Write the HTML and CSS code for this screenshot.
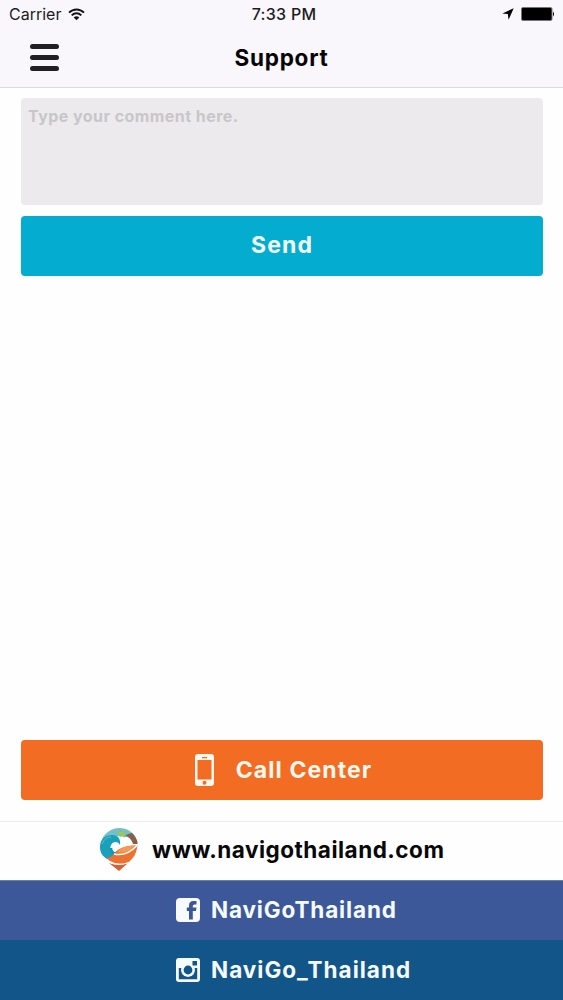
FILE: index.html
```html
<!DOCTYPE html>
<html lang="en">
<head>
<meta charset="utf-8">
<title>Support</title>
<link rel="stylesheet" href="styles.css">
</head>
<body>
<div class="screen">
  <header class="header">
    <div class="status">
      <div class="carrier"><span>Carrier</span>
        <svg class="wifi" width="17" height="13" viewBox="0 0 17 13" fill="none" stroke="#161418" stroke-width="2"><path d="M1 4.600C5.200.3 11.800.3 16 4.600M3.700 7.400C6.500 4.600 10.500 4.600 13.300 7.400"/><path d="M8.500 12.300 5.700 9.400Q8.500 7 11.300 9.400Z" fill="#161418" stroke="none"/></svg>
      </div>
      <span class="clock">7:33 PM</span>
      <div class="indicators">
        <svg width="12" height="12" viewBox="0 0 12 12"><path d="M11.700.3 6.600 11.700 5.800 6.100.3 5.400Z" fill="#000"/></svg>
        <svg width="34" height="14" viewBox="0 0 34 14"><rect x=".5" y=".5" width="30.500" height="13" rx="1.500" fill="#000" stroke="#77757a"/><path d="M32 4.500Q34 7 32 9.500Z" fill="#000"/></svg>
      </div>
    </div>
    <div class="navbar">
      <button class="menu" aria-label="Menu"><i></i><i></i><i></i></button>
      <h1 class="title">Support</h1>
    </div>
  </header>
  <main class="content">
    <textarea class="comment" placeholder="Type your comment here."></textarea>
    <button class="button send"><span>Send</span></button>
    <button class="button call">
      <svg width="19" height="32" viewBox="0 0 19 32"><path fill="#fff8ee" fill-rule="evenodd" d="M3 0H16Q19 0 19 3V29Q19 32 16 32H3Q0 32 0 29V3Q0 0 3 0ZM2.500 6V25.500H16.500V6ZM7 3V4.300H12V3ZM9.500 26.800A2 2 0 1 0 9.500 30.800 2 2 0 1 0 9.500 26.800Z"/></svg>
      <span>Call Center</span>
    </button>
  </main>
  <footer class="links">
    <a class="link web">
      <svg width="38" height="43" viewBox="0 0 38 43">
        <path d="M2 11C6 4 12 0 19 0C27 0 33 4 36 10L26 9L16 8Z" fill="#75bfc8"/>
        <path d="M25 7L32 5C36 9 38 13 37.500 16L33 16C32 12 29 9 25 7Z" fill="#85604a"/>
        <path d="M0 19C0 11 5 7 12 7C18 7 21 11 20 17C18 13 13 13 11 17C9 22 12 26 18 27L12 31L7 31C2 28 0 24 0 19Z" fill="#1a9fbd"/>
        <path d="M11 20C11 25 15 27 20 23" fill="none" stroke="#1597b5" stroke-width="2.500"/>
        <path d="M2 16C4 11 7 9 11 9" fill="none" stroke="#62bfcd" stroke-width="1"/>
        <path d="M14 26C18 20 26 17 37.500 17.500C36 29 30 34 25 36Q17 37 10 33L6 30C10 30 12 28 14 26Z" fill="#ee7131"/>
        <path d="M17 24C22 19 29 17 37 17.500C32 23 25 26 17 24Z" fill="#f59a55"/>
        <path d="M14 26C23 28 31 24 37 17.500" fill="none" stroke="#fff" stroke-width="1.500"/>
        <path d="M9 35Q19 39 28 35L19 43Z" fill="#d95e31"/>
        <path d="M10 34.500Q19 38 29 34.500" fill="none" stroke="#fff" stroke-width="1"/>
        <path d="M20 9 20.500 6 17 9 19 5 16 3 21 4 24 2 23.500 5 28 7 24 6.500 25 10 22 7Z" fill="#9bca50"/>
      </svg>
      <span>www.navigothailand.com</span>
    </a>
    <a class="link facebook">
      <svg width="24" height="24" viewBox="0 0 24 24"><rect width="24" height="24" rx="4" fill="#f7fbff"/><path d="M13 21.500V13H10.800V9.500H13V7.500Q13 3 17.300 3H20.500V6.500H18.500Q16.800 6.500 16.800 8V9.500H20.500L20 13H16.800V21.500Z" fill="#3c5798"/></svg>
      <span>NaviGoThailand</span>
    </a>
    <a class="link instagram">
      <svg width="24" height="24" viewBox="0 0 24 24"><rect width="24" height="24" rx="3" fill="#f5fbff"/><path d="M2.800 10H5.300A7 7 0 1 0 18.700 10H21.200V21.200H2.800ZM16.500 3H21V7.500H16.500Z" fill="#125588"/><circle cx="12" cy="12" r="4.400" fill="#125588"/></svg>
      <span>NaviGo_Thailand</span>
    </a>
  </footer>
</div>
</body>
</html>
```
FILE: styles.css
```css
* { box-sizing: border-box; }
body { margin: 0; font-family: Inter, "Liberation Sans", sans-serif; background: #fefefe; }
button { border: 0; font: inherit; cursor: pointer; }
svg { display: block; flex: none; }
.screen { width: 563px; height: 1000px; display: flex; flex-direction: column; }
.header { height: 88px; background: #f9f7fb; border-bottom: 1px solid #dddbdf; }
.status { height: 28px; padding: 0 8px 0 9px; display: grid; grid-template-columns: 1fr auto 1fr; align-items: center; color: #1d1b1f; }
.carrier { display: flex; align-items: center; gap: 7px; font-size: 16px; letter-spacing: 0; }
.clock { font-size: 16px; font-weight: 500; letter-spacing: .3px; padding-left: 4px; }
.indicators { display: flex; align-items: center; justify-content: flex-end; gap: 7px; }
.navbar { height: 58px; display: grid; grid-template-columns: 90px 1fr 90px; align-items: center; }
.menu { width: 29px; height: 27px; margin-left: 30px; padding: 0; background: none; display: flex; flex-direction: column; justify-content: space-between; }
.menu i { height: 5px; border-radius: 3px; background: #211f24; }
.title { margin: 0; padding-top: 2px; text-align: center; font-size: 22.5px; line-height: 30px; font-weight: 700; letter-spacing: .75px; color: #050406; }
.content { flex: 1; padding: 10px 20px 21px 21px; display: flex; flex-direction: column; }
.comment { width: 100%; height: 107px; margin: 0 0 11px; padding: 7px 7px; border: 0; border-radius: 4px; resize: none; background: #eceaed; font: 700 16px/22px Inter, sans-serif; letter-spacing: .45px; }
.comment::placeholder { color: #c8c6c9; opacity: 1; }
.button { width: 100%; height: 60px; padding: 0 0 2px; border-radius: 4px; display: flex; align-items: center; justify-content: center; font-size: 23px; font-weight: 700; letter-spacing: 1.100px; color: #f2ffff; }
.send { background: #04adcf; }
.call { margin-top: auto; padding-bottom: 0; gap: 22px; background: #f26c24; color: #fff8ee; }
.call svg { margin-left: 3px; }
.call span { padding-bottom: 1px; }
.links { height: 179px; border-top: 1px solid #ececee; }
.link { height: 60px; display: flex; align-items: center; font-size: 22.5px; font-weight: 700; color: #f4faff; padding-left: 176px; gap: 11px; }
.web { height: 58px; gap: 14px; padding: 0 0 3px 100px; color: #080808; letter-spacing: .5px; }
.facebook { padding-bottom: 1px; letter-spacing: .85px; background: #3d5899; border-top: 1px solid #6680ac; }
.instagram { letter-spacing: 1px; background: #125588; }
.facebook span, .instagram span { padding-bottom: 1px; }
```
